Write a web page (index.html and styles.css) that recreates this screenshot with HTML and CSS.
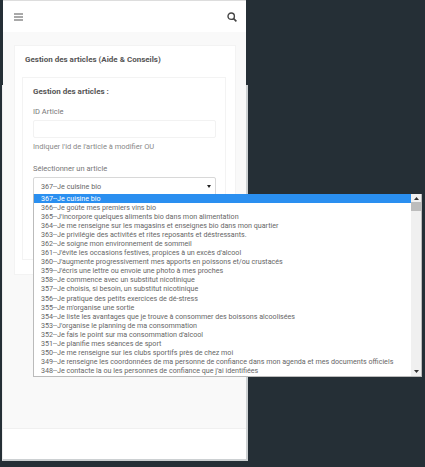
FILE: index.html
```html
<!DOCTYPE html>
<html lang="fr">
<head>
    <meta charset="UTF-8">
    <meta name="viewport" content="width=device-width, initial-scale=1.0">
    <title>Gestion des articles</title>
    <link rel="stylesheet" href="styles.css">
</head>
<body>
    <div class="shell">
        <header class="topbar">
            <svg class="icon-menu" width="9" height="8" viewBox="0 0 9 8">
                <path d="M0 1h9M0 4h9M0 7h9" stroke="#555" stroke-width="1.2" fill="none"/>
            </svg>
            <svg class="icon-search" width="10" height="10" viewBox="0 0 10 10">
                <circle cx="4.2" cy="4.2" r="3.2" stroke="#444" stroke-width="1.4" fill="none"/>
                <path d="M6.6 6.6L9.4 9.4" stroke="#444" stroke-width="1.6" fill="none"/>
            </svg>
        </header>

        <main class="content">
            <section class="card">
                <h2 class="card-title">Gestion des articles (Aide &amp; Conseils)</h2>
                <div class="inner-card">
                    <h3 class="form-title">Gestion des articles :</h3>

                    <div class="form-group">
                        <label class="field-label" for="idArticle">ID Article</label>
                        <input class="field-input" type="text" id="idArticle">
                        <p class="help-text">Indiquer l'id de l'article à modifier OU</p>
                    </div>

                    <div class="form-group select-group">
                        <span class="field-label">Sélectionner un article</span>
                        <div class="select-box">
                            <span>367--Je cuisine bio</span>
                            <svg width="4" height="3" viewBox="0 0 4 3"><path d="M0 0h4L2 3z" fill="#222"/></svg>
                        </div>

                        <div class="dropdown">
                            <ul class="option-list">
                                <li class="selected">367--Je cuisine bio</li>
                                <li>366--Je goûte mes premiers vins bio</li>
                                <li>365--J'incorpore quelques aliments bio dans mon alimentation</li>
                                <li>364--Je me renseigne sur les magasins et enseignes bio dans mon quartier</li>
                                <li>363--Je privilégie des activités et rites reposants et déstressants.</li>
                                <li>362--Je soigne mon environnement de sommeil</li>
                                <li>361--J'évite les occasions festives, propices à un excès d'alcool</li>
                                <li>360--J'augmente progressivement mes apports en poissons et/ou crustacés</li>
                                <li>359--J'écris une lettre ou envoie une photo à mes proches</li>
                                <li>358--Je commence avec un substitut nicotinique</li>
                                <li>357--Je choisis, si besoin, un substitut nicotinique</li>
                                <li>356--Je pratique des petits exercices de dé-stress</li>
                                <li>355--Je m'organise une sortie</li>
                                <li>354--Je liste les avantages que je trouve à consommer des boissons alcoolisées</li>
                                <li>353--J'organise le planning de ma consommation</li>
                                <li>352--Je fais le point sur ma consommation d'alcool</li>
                                <li>351--Je planifie mes séances de sport</li>
                                <li>350--Je me renseigne sur les clubs sportifs près de chez moi</li>
                                <li>349--Je renseigne les coordonnées de ma personne de confiance dans mon agenda et mes documents officiels</li>
                                <li>348--Je contacte la ou les personnes de confiance que j'ai identifiées</li>
                            </ul>
                            <div class="scrollbar">
                                <svg width="5" height="3" viewBox="0 0 5 3"><path d="M0 3h5L2.500 0z" fill="#333"/></svg>
                                <div class="scroll-thumb"></div>
                                <svg class="scroll-down" width="5" height="3" viewBox="0 0 5 3"><path d="M0 0h5L2.500 3z" fill="#333"/></svg>
                            </div>
                        </div>
                    </div>
                </div>
            </section>
        </main>

        <footer class="footer"></footer>
    </div>
</body>
</html>
```

FILE: styles.css
```css
html, body {
    height: 100%;
}

body {
    margin: 0;
    background-color: #252f36;
    font-family: 'Roboto', 'Noto Sans', sans-serif;
    color: #666;
    overflow: hidden;
}

.shell {
    position: relative;
    display: flex;
    flex-direction: column;
    width: 243px;
    height: 459px;
    margin-left: 3px;
    border-top: 1px solid #ddd;
    box-sizing: border-box;
    background-color: white;
}

/* lighter frame of the lower part of the page */
.shell::after {
    content: "";
    position: absolute;
    top: 84px;
    left: -1px;
    right: -2px;
    bottom: -2px;
    border-right: 2px solid #ccd0d2;
    border-bottom: 2px solid #ccd0d2;
    border-left: 1px solid #eee;
    pointer-events: none;
}

.topbar {
    display: flex;
    justify-content: space-between;
    align-items: center;
    height: 31px;
    padding: 0 9px 0 11px;
    background-color: white;
}

.icon-menu {
    display: block;
}

.icon-search {
    display: block;
}

.content {
    flex: 1;
    padding: 13px 10px 0 11px;
    background-color: #f9f9f9;
    border-bottom: 1px solid #f0f0f0;
}

.footer {
    height: 30px;
    background-color: white;
}

.card {
    background-color: white;
    border: 1px solid #f3f3f3;
    padding: 9px 9px 14px 7px;
}

.card-title {
    margin: 0 0 12px;
    padding-left: 3px;
    font-size: 8px;
    line-height: 10px;
    font-weight: 700;
    color: #555;
}

.inner-card {
    border: 1px solid #f3f3f3;
    padding: 9px 9px 60px 10px;
    height: 183px;
    box-sizing: border-box;
}

.form-title {
    margin: 0 0 10px;
    font-size: 8px;
    line-height: 10px;
    font-weight: 700;
    color: #555;
}

.form-group {
    margin-bottom: 12px;
}

.field-label {
    display: block;
    margin-bottom: 3px;
    font-size: 7.5px;
    line-height: 10px;
    color: #777;
}

.field-input {
    display: block;
    width: 100%;
    height: 18px;
    padding: 0;
    border: 1px solid #f2f2f2;
    border-radius: 2px;
    box-sizing: border-box;
    background-color: white;
}

.help-text {
    margin: 4px 0 0;
    font-size: 7.5px;
    line-height: 10px;
    color: #888;
}

.select-group {
    position: relative;
}

.select-box {
    display: flex;
    justify-content: space-between;
    align-items: center;
    height: 18px;
    padding: 0 4px 0 7px;
    border: 1px solid #d8d8d8;
    border-radius: 2px 2px 0 0;
    box-sizing: border-box;
    font-size: 7.2px;
    color: #666;
    background-color: white;
}

.dropdown {
    position: absolute;
    z-index: 1;
    top: 30px;
    left: 0;
    display: flex;
    width: 389px;
    height: 183px;
    border: 1px solid #bbb;
    border-top: none;
    box-sizing: border-box;
    background-color: white;
}

.option-list {
    flex: 1;
    margin: 0;
    padding: 0;
    list-style: none;
}

.option-list li {
    height: 9.05px;
    padding-left: 7px;
    font-size: 7.15px;
    line-height: 9.05px;
    color: #666;
    white-space: nowrap;
}

.option-list .selected {
    background-color: #2a8ff0;
    color: white;
}

.scrollbar {
    display: flex;
    flex-direction: column;
    align-items: center;
    width: 10px;
    padding: 3px 0;
    box-sizing: border-box;
    background-color: #f0f0f0;
}

.scroll-thumb {
    width: 100%;
    height: 9px;
    margin-top: 2px;
    background-color: #bdbdbd;
}

.scroll-down {
    margin-top: auto;
}
```
